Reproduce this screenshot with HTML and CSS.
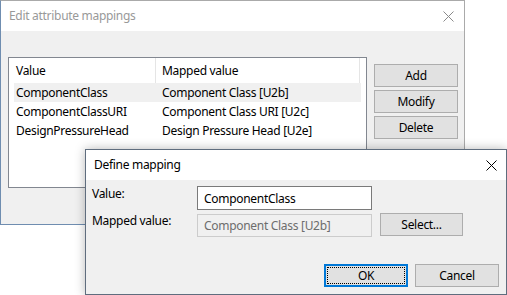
FILE: index.html
```html
<!DOCTYPE html>
<html>
<head>
<meta charset="utf-8">
<link rel="stylesheet" href="styles.css">
</head>
<body>
<div class="win outer">
  <div class="titlebar">
    <span class="title inactive">Edit attribute mappings</span>
    <svg class="close" width="11" height="11" viewBox="0 0 11 11"><path d="M0.5 0.5 L10.5 10.5 M10.5 0.5 L0.5 10.5" stroke="#8a8a8a" stroke-width="1"/></svg>
  </div>
  <div class="outer-body">
    <div class="list">
      <div class="list-head">
        <div class="col c1">Value</div>
        <div class="col c2">Mapped value</div>
      </div>
      <div class="row sel"><div class="c1">ComponentClass</div><div class="c2">Component Class [U2b]</div></div>
      <div class="row"><div class="c1">ComponentClassURI</div><div class="c2">Component Class URI [U2c]</div></div>
      <div class="row"><div class="c1">DesignPressureHead</div><div class="c2">Design Pressure Head [U2e]</div></div>
    </div>
    <div class="side">
      <button class="btn">Add</button>
      <button class="btn">Modify</button>
      <button class="btn">Delete</button>
    </div>
  </div>
</div>

<div class="win inner">
  <div class="titlebar">
    <span class="title">Define mapping</span>
    <svg class="close" width="11" height="11" viewBox="0 0 11 11"><path d="M0.5 0.5 L10.5 10.5 M10.5 0.5 L0.5 10.5" stroke="#000" stroke-width="1"/></svg>
  </div>
  <div class="inner-body">
    <div class="form">
      <label class="lbl">Value:</label>
      <div class="field">ComponentClass</div>
      <div></div>
      <label class="lbl">Mapped value:</label>
      <div class="field disabled">Component Class [U2b]</div>
      <button class="btn select">Select...</button>
    </div>
    <div class="footer">
      <button class="btn ok"><span class="focus">OK</span></button>
      <button class="btn">Cancel</button>
    </div>
  </div>
</div>
</body>
</html>
```

FILE: styles.css
```css
* { box-sizing: border-box; }
html, body {
  margin: 0;
  padding: 0;
  background: #ffffff;
  width: 507px;
  height: 295px;
  overflow: hidden;
  font-family: "Noto Sans", "Segoe UI", sans-serif;
  font-size: 12px;
  letter-spacing: -0.3px;
  color: #000;
}
.win {
  position: absolute;
  background: #f0f0f0;
  display: flex;
  flex-direction: column;
}
.outer {
  left: 0;
  top: 0;
  width: 465px;
  height: 225px;
  border: 1px solid #aaaaaa;
  border-left-color: #6f8db0;
  border-bottom-color: #6f8db0;
}
.inner {
  left: 85px;
  top: 149px;
  width: 422px;
  height: 146px;
  border: 1px solid #5f6d7e;
  box-shadow: 0 0 10px rgba(0,0,0,0.28);
}
.titlebar {
  height: 30px;
  background: #ffffff;
  display: flex;
  align-items: center;
  justify-content: space-between;
  flex: none;
}
.outer .titlebar { padding: 0 10px 0 8px; }
.inner .titlebar { padding: 0 9px 0 8px; }
.title { line-height: 16px; }
.title.inactive { color: #999999; }
.close { display: block; }

.outer-body {
  display: flex;
  padding: 26px 0 0 7px;
  gap: 7px;
  flex: 1;
}
.list {
  width: 359px;
  height: 131px;
  background: #ffffff;
  border: 1px solid #828790;
  padding: 0 5px;
}
.list-head {
  display: flex;
  height: 25px;
  align-items: center;
}
.list-head .col {
  height: 100%;
  display: flex;
  align-items: center;
}
.list-head .c1 { border-right: 1px solid #e5e5e5; }
.list-head .c2 { border-right: 1px solid #e5e5e5; }
.c1 { width: 142px; padding-left: 2px; }
.c2 { width: 204px; padding-left: 6px; }
.row {
  display: flex;
  height: 19px;
  align-items: center;
}
.row.sel { background: #f0f0f0; }

.side {
  display: flex;
  flex-direction: column;
  gap: 3px;
  padding-top: 7px;
}
.btn {
  font-family: inherit;
  font-size: 12px;
  letter-spacing: -0.3px;
  color: #000;
  width: 84px;
  height: 23px;
  background: #e1e1e1;
  border: 1px solid #adadad;
  padding: 0;
  margin: 0;
  display: flex;
  align-items: center;
  justify-content: center;
  line-height: 16px;
}

.inner-body {
  flex: 1;
  display: flex;
  flex-direction: column;
  justify-content: space-between;
  padding: 6px 7px 7px 6px;
}
.form {
  display: grid;
  grid-template-columns: 105px 175px 92px;
  row-gap: 3px;
  align-items: start;
}
.form .select { margin-left: 8px; width: 83px; }
.lbl { line-height: 16px; }
.field {
  height: 24px;
  border: 1px solid #7a7a7a;
  background: #ffffff;
  padding-left: 6px;
  display: flex;
  align-items: center;
}
.field.disabled {
  height: 23px;
  border-color: #cccccc;
  background: #f0f0f0;
  color: #6d6d6d;
  margin-top: 1px;
}
.footer {
  display: flex;
  justify-content: flex-end;
  gap: 7px;
}
.btn.ok {
  border: 2px solid #0078d7;
  padding: 1px;
}
.btn.ok .focus {
  width: 100%;
  height: 100%;
  border: 1px dotted #000;
  display: flex;
  align-items: center;
  justify-content: center;
}
```
